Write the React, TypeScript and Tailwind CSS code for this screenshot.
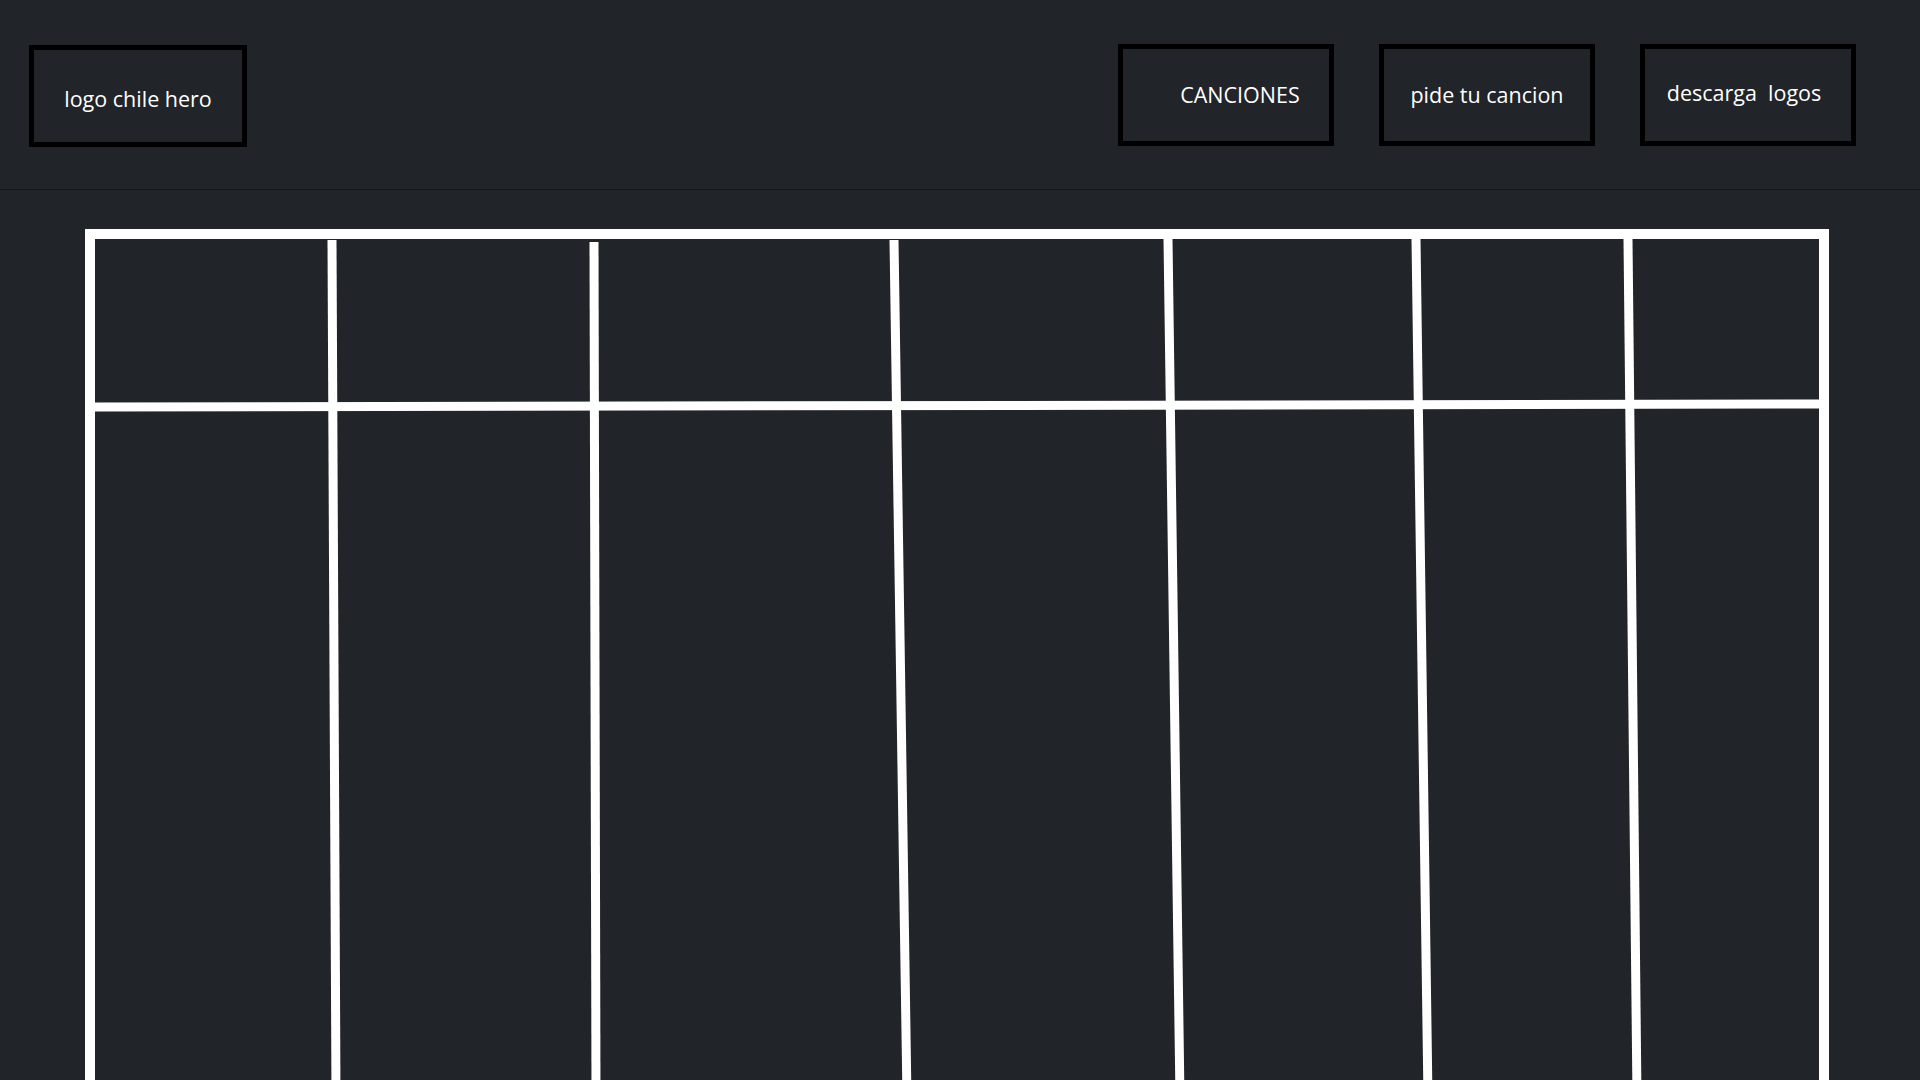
const navItems = [
  { label: 'CANCIONES', className: 'pl-[28px]' },
  { label: 'pide tu cancion', className: '' },
  { label: 'descarga\u00a0 logos', className: 'pr-[8px] pb-[3px]' },
];

// sketched column dividers, coordinates inside the frame
const columnLines = [
  { x1: 237, y1: 1, x2: 241, y2: 860 },
  { x1: 499, y1: 3, x2: 501, y2: 860 },
  { x1: 799, y1: 1, x2: 812, y2: 860 },
  { x1: 1073, y1: 0, x2: 1085, y2: 860 },
  { x1: 1321, y1: 0, x2: 1333, y2: 860 },
  { x1: 1533, y1: 0, x2: 1542, y2: 860 },
];

function NavBox({ label, className }: { label: string; className: string }) {
  return (
    <a
      href="#"
      className={`flex h-[102px] w-[216px] items-center justify-center border-[5px] border-black text-[21.5px] text-white ${className}`}
    >
      {label}
    </a>
  );
}

export default function App() {
  return (
    <div
      className="h-screen overflow-hidden bg-[#212429] text-white"
      style={{ fontFamily: '"Open Sans", "Noto Sans", sans-serif' }}
    >
      <header className="flex h-[190px] items-start justify-between border-b border-[#15171a] pl-[29px] pr-[64px] pt-[44px]">
        <div className="mt-[1px] flex h-[102px] w-[218px] items-center justify-center border-[5px] border-black pt-[7px] text-[21.5px]">
          logo chile hero
        </div>
        <nav className="flex gap-[45px]">
          {navItems.map((item) => (
            <NavBox key={item.label} label={item.label} className={item.className} />
          ))}
        </nav>
      </header>

      <main className="pl-[85px] pr-[91px] pt-[39px]">
        <div className="h-[900px] border-x-[10px] border-t-[10px] border-white">
          <svg width="100%" height="100%" viewBox="0 0 1724 890" preserveAspectRatio="none">
            <line x1="0" y1="168" x2="1724" y2="165" stroke="#fff" strokeWidth="9" />
            {columnLines.map((l, i) => (
              <line key={i} x1={l.x1} y1={l.y1} x2={l.x2} y2={l.y2} stroke="#fff" strokeWidth="9" />
            ))}
          </svg>
        </div>
      </main>
    </div>
  );
}
